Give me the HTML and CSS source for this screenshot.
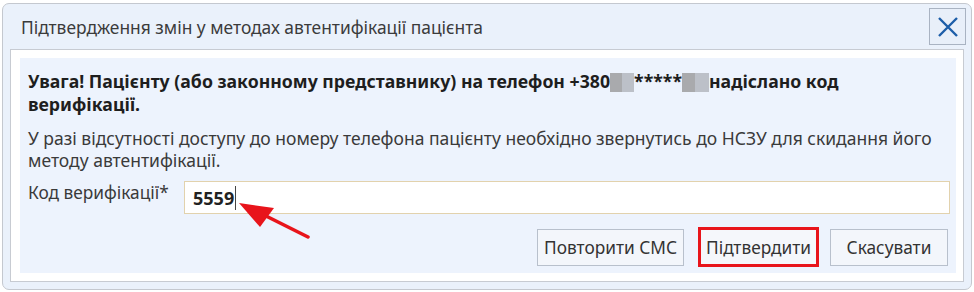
FILE: index.html
```html
<!DOCTYPE html>
<html lang="uk">
<head>
<meta charset="utf-8">
<link rel="stylesheet" href="styles.css">
</head>
<body>
<div class="window">
  <div class="header">
    <div class="title">Підтвердження змін у методах автентифікації пацієнта</div>
    <button class="close" aria-label="Закрити">
      <svg width="22" height="22" viewBox="0 0 22 22"><path d="M2 2 L20 20 M20 2 L2 20" stroke="#1c5ea8" stroke-width="2.4" fill="none"/></svg>
    </button>
  </div>
  <div class="content">
    <div class="inner">
      <p class="warn">Увага! Пацієнту (або законному представнику) на телефон +380<span class="mask mask-a"><i></i><i></i></span>*****<span class="mask mask-b"><i></i><i></i></span>надіслано код верифікації.</p>
      <p class="info">У разі відсутності доступу до номеру телефона пацієнту необхідно звернутись до НСЗУ для скидання його методу автентифікації.</p>
      <div class="field">
        <label class="label">Код верифікації*</label>
        <div class="input"><span class="value">5559</span><span class="caret"></span></div>
      </div>
      <div class="actions">
        <button class="btn btn-repeat">Повторити СМС</button>
        <button class="btn btn-confirm">Підтвердити</button>
        <button class="btn btn-cancel">Скасувати</button>
      </div>
    </div>
  </div>
</div>
<svg class="arrow" width="90" height="50" viewBox="0 0 90 50">
  <line x1="77" y1="43" x2="25" y2="17" stroke="#e8141b" stroke-width="3.5" stroke-linecap="round"/>
  <polygon points="8,9 43,14 29,33" fill="#e8141b"/>
</svg>
</body>
</html>
```
FILE: styles.css
```css
html, body {
  margin: 0;
  padding: 0;
  background: #ffffff;
}
body {
  position: relative;
  width: 974px;
  height: 292px;
  overflow: hidden;
  font-family: "Noto Sans", "Open Sans", sans-serif;
  font-size: 17px;
  color: #333;
}
.window {
  box-sizing: border-box;
  margin: 3px 2px 0 2px;
  width: 970px;
  height: 287px;
  border: 1px solid #c4c8cf;
  border-radius: 7px;
  background: #eaf1fb;
  display: flex;
  flex-direction: column;
}
.header {
  height: 45px;
  display: flex;
  align-items: flex-start;
  justify-content: space-between;
}
.title {
  margin: 12px 0 0 18px;
  font-size: 17.4px;
  color: #3b3b3b;
  line-height: 22px;
}
.close {
  box-sizing: border-box;
  margin: 4px 5px 0 0;
  width: 37px;
  height: 37px;
  border: 1px solid #a9b3c2;
  background: #e8eff9;
  padding: 0;
  display: flex;
  align-items: center;
  justify-content: center;
}
.content {
  box-sizing: border-box;
  margin: 0 7px 0 7px;
  height: 233px;
  border: 1px solid #c7cbd2;
  background: #ffffff;
  padding: 8px 7px 8px 9px;
}
.inner {
  box-sizing: border-box;
  height: 100%;
  background: #edf3fd;
  padding: 12px 8px 0 8px;
  display: flex;
  flex-direction: column;
}
.warn {
  margin: 0;
  max-width: 860px;
  font-weight: 700;
  color: #1e1e1e;
  font-size: 17.7px;
  line-height: 23px;
}
.mask {
  display: inline-flex;
  vertical-align: -4px;
  height: 19px;
}
.mask-a {
  width: 24px;
}
.mask-b {
  width: 27px;
}
.mask i {
  flex: 1;
  background: #a9aaad;
}
.mask i + i {
  background: #bcc0c8;
}
.info {
  margin: 11px 0 0 0;
  font-size: 17.5px;
  line-height: 22px;
  color: #3a3a3a;
}
.field {
  margin-top: 10px;
  display: flex;
  align-items: flex-start;
}
.label {
  width: 156px;
  flex: none;
  font-size: 17.3px;
  line-height: 22px;
  padding-top: 1px;
  color: #3a3a3a;
}
.input {
  box-sizing: border-box;
  flex: none;
  width: 766px;
  height: 33px;
  border: 1px solid #e2d2ad;
  background: #ffffff;
  display: flex;
  align-items: center;
  padding-left: 8px;
}
.value {
  font-weight: 700;
  font-size: 18px;
  color: #222;
}
.caret {
  width: 1px;
  height: 24px;
  background: #444;
  margin-left: 1px;
}
.actions {
  margin-top: 13px;
  display: flex;
  justify-content: flex-end;
  align-items: center;
}
.btn {
  box-sizing: border-box;
  height: 37px;
  border: 1px solid #b8c0cc;
  background: #f3f6fb;
  font-family: "Noto Sans", "Open Sans", sans-serif;
  font-size: 17.3px;
  color: #333;
  padding: 0;
  white-space: nowrap;
}
.btn-repeat {
  width: 147px;
}
.btn-confirm {
  width: 121px;
  height: 40px;
  margin-left: 14px;
  border: 3px solid #e8141b;
  background: #f5f7fb;
}
.btn-cancel {
  width: 118px;
  margin-left: 11px;
}
.arrow {
  position: absolute;
  left: 231px;
  top: 194px;
}
```
